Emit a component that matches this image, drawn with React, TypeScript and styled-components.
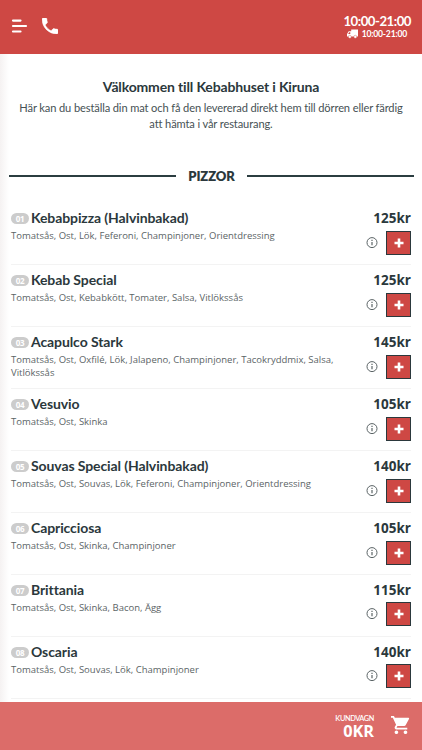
import React from "react";
import styled, { createGlobalStyle } from "styled-components";

const GlobalStyle = createGlobalStyle`
  * { box-sizing: border-box; }
  body { margin: 0; background: #fff; overflow: hidden; }
`;

const Page = styled.div`
  position: relative;
  display: flex;
  flex-direction: column;
  width: 422px;
  height: 750px;
  overflow: hidden;
  background: #fff;
  color: #2b383c;
  font-family: Lato, sans-serif;
  font-variant-ligatures: none;
`;

const EdgeShade = styled.div`
  position: absolute;
  left: 0;
  top: 54px;
  bottom: 48px;
  width: 9px;
  background: linear-gradient(to right, #f5f2f2, #fff);
`;

const Header = styled.header`
  flex: none;
  display: flex;
  justify-content: space-between;
  height: 54px;
  padding: 0 11px 0 11px;
  background: #ce4844;
  color: #fff;
`;

const HeaderActions = styled.div`
  display: flex;
  align-items: flex-start;
  gap: 14px;
  padding-top: 17px;
  svg { display: block; }
`;

const Hours = styled.div`
  display: flex;
  flex-direction: column;
  align-items: flex-end;
  padding-top: 13px;
`;

const OpenHours = styled.div`
  font-size: 13.2px;
  line-height: 16px;
  font-weight: 700;
  letter-spacing: -0.48px;
`;

const DeliveryHours = styled.div`
  display: flex;
  align-items: center;
  gap: 4px;
  padding-right: 4px;
  font-size: 8.6px;
  line-height: 10px;
  font-weight: 700;
  letter-spacing: -0.2px;
`;

const Welcome = styled.section`
  position: relative;
  flex: none;
  height: 106px;
  padding: 24px 16px 0;
  text-align: center;
`;

const WelcomeTitle = styled.h1`
  margin: 0;
  font-size: 14px;
  line-height: 18px;
  font-weight: 700;
  letter-spacing: -0.15px;
`;

const WelcomeText = styled.p`
  margin: 4px 0 0;
  font-size: 11.1px;
  line-height: 16px;
  letter-spacing: -0.12px;
  color: #465154;
`;

const SectionTitle = styled.h2`
  position: relative;
  flex: none;
  display: flex;
  align-items: center;
  gap: 12px;
  height: 32px;
  margin: 0 8px 0 9px;
  font-size: 13px;
  font-weight: 800;
  letter-spacing: -0.1px;
  &::before, &::after {
    content: "";
    flex: 1;
    height: 2px;
    background: #2b3d40;
  }
`;

const Menu = styled.main`
  position: relative;
  flex: 1;
  min-height: 0;
  overflow: hidden;
  padding: 11px 11px 0;
`;

const Row = styled.article`
  display: flex;
  justify-content: space-between;
  height: 61.94px;
  padding-top: 6.45px;
  border-bottom: 1px solid #f3f3f3;
`;

const Info = styled.div`
  width: 335px;
`;

const NameLine = styled.div`
  display: flex;
  align-items: center;
  gap: 2px;
  height: 18px;
`;

const Badge = styled.span`
  width: 18px;
  height: 11px;
  border-radius: 6px;
  background: #ccc;
  color: #fff;
  font: 700 8px/11px "Open Sans", sans-serif;
  letter-spacing: -0.3px;
  text-align: center;
`;

const Name = styled.h3`
  margin: 0;
  font-size: 14px;
  line-height: 18px;
  font-weight: 700;
  letter-spacing: -0.1px;
  white-space: nowrap;
`;

const Ingredients = styled.p`
  margin: 1.5px 0 0;
  font: 400 9.5px/13px "Open Sans", sans-serif;
  color: #5b6466;
`;

const Purchase = styled.div`
  display: flex;
  flex-direction: column;
  align-items: flex-end;
`;

const Price = styled.div`
  font: 700 13.5px/18px "Open Sans", sans-serif;
`;

const Controls = styled.div`
  display: flex;
  align-items: center;
  gap: 8px;
  margin-top: 3.4px;
  svg { display: block; }
`;

const AddButton = styled.button`
  display: flex;
  align-items: center;
  justify-content: center;
  width: 25px;
  height: 24px;
  padding: 0;
  border: 1.5px solid #2b383c;
  background: #ce4844;
`;

const Footer = styled.footer`
  position: relative;
  flex: none;
  display: flex;
  justify-content: flex-end;
  gap: 17px;
  height: 48px;
  padding: 12px 12px 0 0;
  background: #dc6c69;
  color: #fff;
  svg { display: block; margin-top: 1px; }
`;

const CartSummary = styled.div`
  display: flex;
  flex-direction: column;
  align-items: flex-end;
  white-space: nowrap;
`;

const CartLabel = styled.div`
  font-size: 7.3px;
  line-height: 9px;
  font-weight: 600;
  letter-spacing: -0.38px;
`;

const CartTotal = styled.div`
  font: 700 16.3px/16px "Open Sans", sans-serif;
`;

const MenuIcon = () => (
  <svg width="17" height="18" viewBox="0 0 17 18" stroke="#fff" strokeWidth="2.2" strokeLinecap="round">
    <path d="M2 3.600h7.500M2 9h13M2 14.500h7.500" />
  </svg>
);

const PhoneIcon = () => (
  <svg width="16" height="16" viewBox="3 3 18 18" fill="#fff">
    <path
      stroke="#fff"
      strokeWidth=".5"
      d="M6.620 10.790c1.440 2.830 3.760 5.140 6.590 6.590l2.200-2.200c.27-.27.67-.36 1.020-.24 1.120.37 2.330.57 3.570.57.55 0 1 .45 1 1V20c0 .55-.45 1-1 1-9.390 0-17-7.610-17-17 0-.55.45-1 1-1h3.500c.55 0 1 .45 1 1 0 1.250.2 2.450.57 3.570.11.35.03.74-.25 1.020z"
    />
  </svg>
);

const PhoneLink = styled.a`
  padding-top: 1px;
`;

const TruckIcon = () => (
  <svg width="11" height="10" viewBox="0 0 11 10" fill="#fff">
    <path d="M4.200 .6H11v6.800H0V5l1.700-2.700h2.500zM3.300 3.300H2.200L1.100 5h2.200z" fillRule="evenodd" />
    <circle cx="2.800" cy="7.800" r="1.500" stroke="#ce4844" strokeWidth=".4" />
    <circle cx="8.300" cy="7.800" r="1.500" stroke="#ce4844" strokeWidth=".4" />
  </svg>
);

const InfoIcon = () => (
  <svg width="12" height="12" viewBox="0 0 12 12" fill="none" stroke="#5b6466">
    <circle cx="6" cy="5.600" r="5" />
    <path d="M6 4.900v3.400M6 2.800v1.200" strokeWidth="1.200" />
  </svg>
);

const PlusIcon = () => (
  <svg width="10" height="10" viewBox="0 0 10 10" stroke="#fff" strokeWidth="2.600">
    <path d="M5 .5v9M.5 5h9" />
  </svg>
);

const CartIcon = () => (
  <svg width="19" height="20" viewBox="1 1.500 21 21" fill="#fff">
    <path d="M7 18c-1.100 0-2 .9-2 2s.9 2 2 2 2-.9 2-2-.9-2-2-2zM1 2v2h2l3.600 7.600-1.350 2.450C4.520 15.370 5.480 17 7 17h12v-2H7.420c-.14 0-.25-.11-.25-.25l.03-.12.900-1.630h7.450c.75 0 1.410-.41 1.750-1.030l3.580-6.490A1 1 0 0 0 20 4H5.210l-.94-2zm16 16c-1.100 0-2 .9-2 2s.9 2 2 2 2-.9 2-2-.9-2-2-2z" />
  </svg>
);

const pizzas = [
  { name: "Kebabpizza (Halvinbakad)", price: 125, items: "Tomatsås, Ost, Lök, Feferoni, Champinjoner, Orientdressing" },
  { name: "Kebab Special", price: 125, items: "Tomatsås, Ost, Kebabkött, Tomater, Salsa, Vitlökssås" },
  { name: "Acapulco Stark", price: 145, items: "Tomatsås, Ost, Oxfilé, Lök, Jalapeno, Champinjoner, Tacokryddmix, Salsa, Vitlökssås" },
  { name: "Vesuvio", price: 105, items: "Tomatsås, Ost, Skinka" },
  { name: "Souvas Special (Halvinbakad)", price: 140, items: "Tomatsås, Ost, Souvas, Lök, Feferoni, Champinjoner, Orientdressing" },
  { name: "Capricciosa", price: 105, items: "Tomatsås, Ost, Skinka, Champinjoner" },
  { name: "Brittania", price: 115, items: "Tomatsås, Ost, Skinka, Bacon, Ägg" },
  { name: "Oscaria", price: 140, items: "Tomatsås, Ost, Souvas, Lök, Champinjoner" },
];

export default function App() {
  return (
    <Page>
      <GlobalStyle />
      <EdgeShade />
      <Header>
        <HeaderActions>
          <MenuIcon />
          <PhoneLink>
            <PhoneIcon />
          </PhoneLink>
        </HeaderActions>
        <Hours>
          <OpenHours>10:00-21:00</OpenHours>
          <DeliveryHours>
            <TruckIcon />
            10:00-21:00
          </DeliveryHours>
        </Hours>
      </Header>
      <Welcome>
        <WelcomeTitle>Välkommen till Kebabhuset i Kiruna</WelcomeTitle>
        <WelcomeText>
          Här kan du beställa din mat och få den levererad direkt hem till dörren eller färdig att hämta i vår restaurang.
        </WelcomeText>
      </Welcome>
      <SectionTitle>PIZZOR</SectionTitle>
      <Menu>
        {pizzas.map((pizza, i) => (
          <Row key={pizza.name}>
            <Info>
              <NameLine>
                <Badge>{String(i + 1).padStart(2, "0")}</Badge>
                <Name>{pizza.name}</Name>
              </NameLine>
              <Ingredients>{pizza.items}</Ingredients>
            </Info>
            <Purchase>
              <Price>{pizza.price}kr</Price>
              <Controls>
                <InfoIcon />
                <AddButton aria-label="Lägg till">
                  <PlusIcon />
                </AddButton>
              </Controls>
            </Purchase>
          </Row>
        ))}
      </Menu>
      <Footer>
        <CartSummary>
          <CartLabel>KUNDVAGN</CartLabel>
          <CartTotal>0KR</CartTotal>
        </CartSummary>
        <CartIcon />
      </Footer>
    </Page>
  );
}
